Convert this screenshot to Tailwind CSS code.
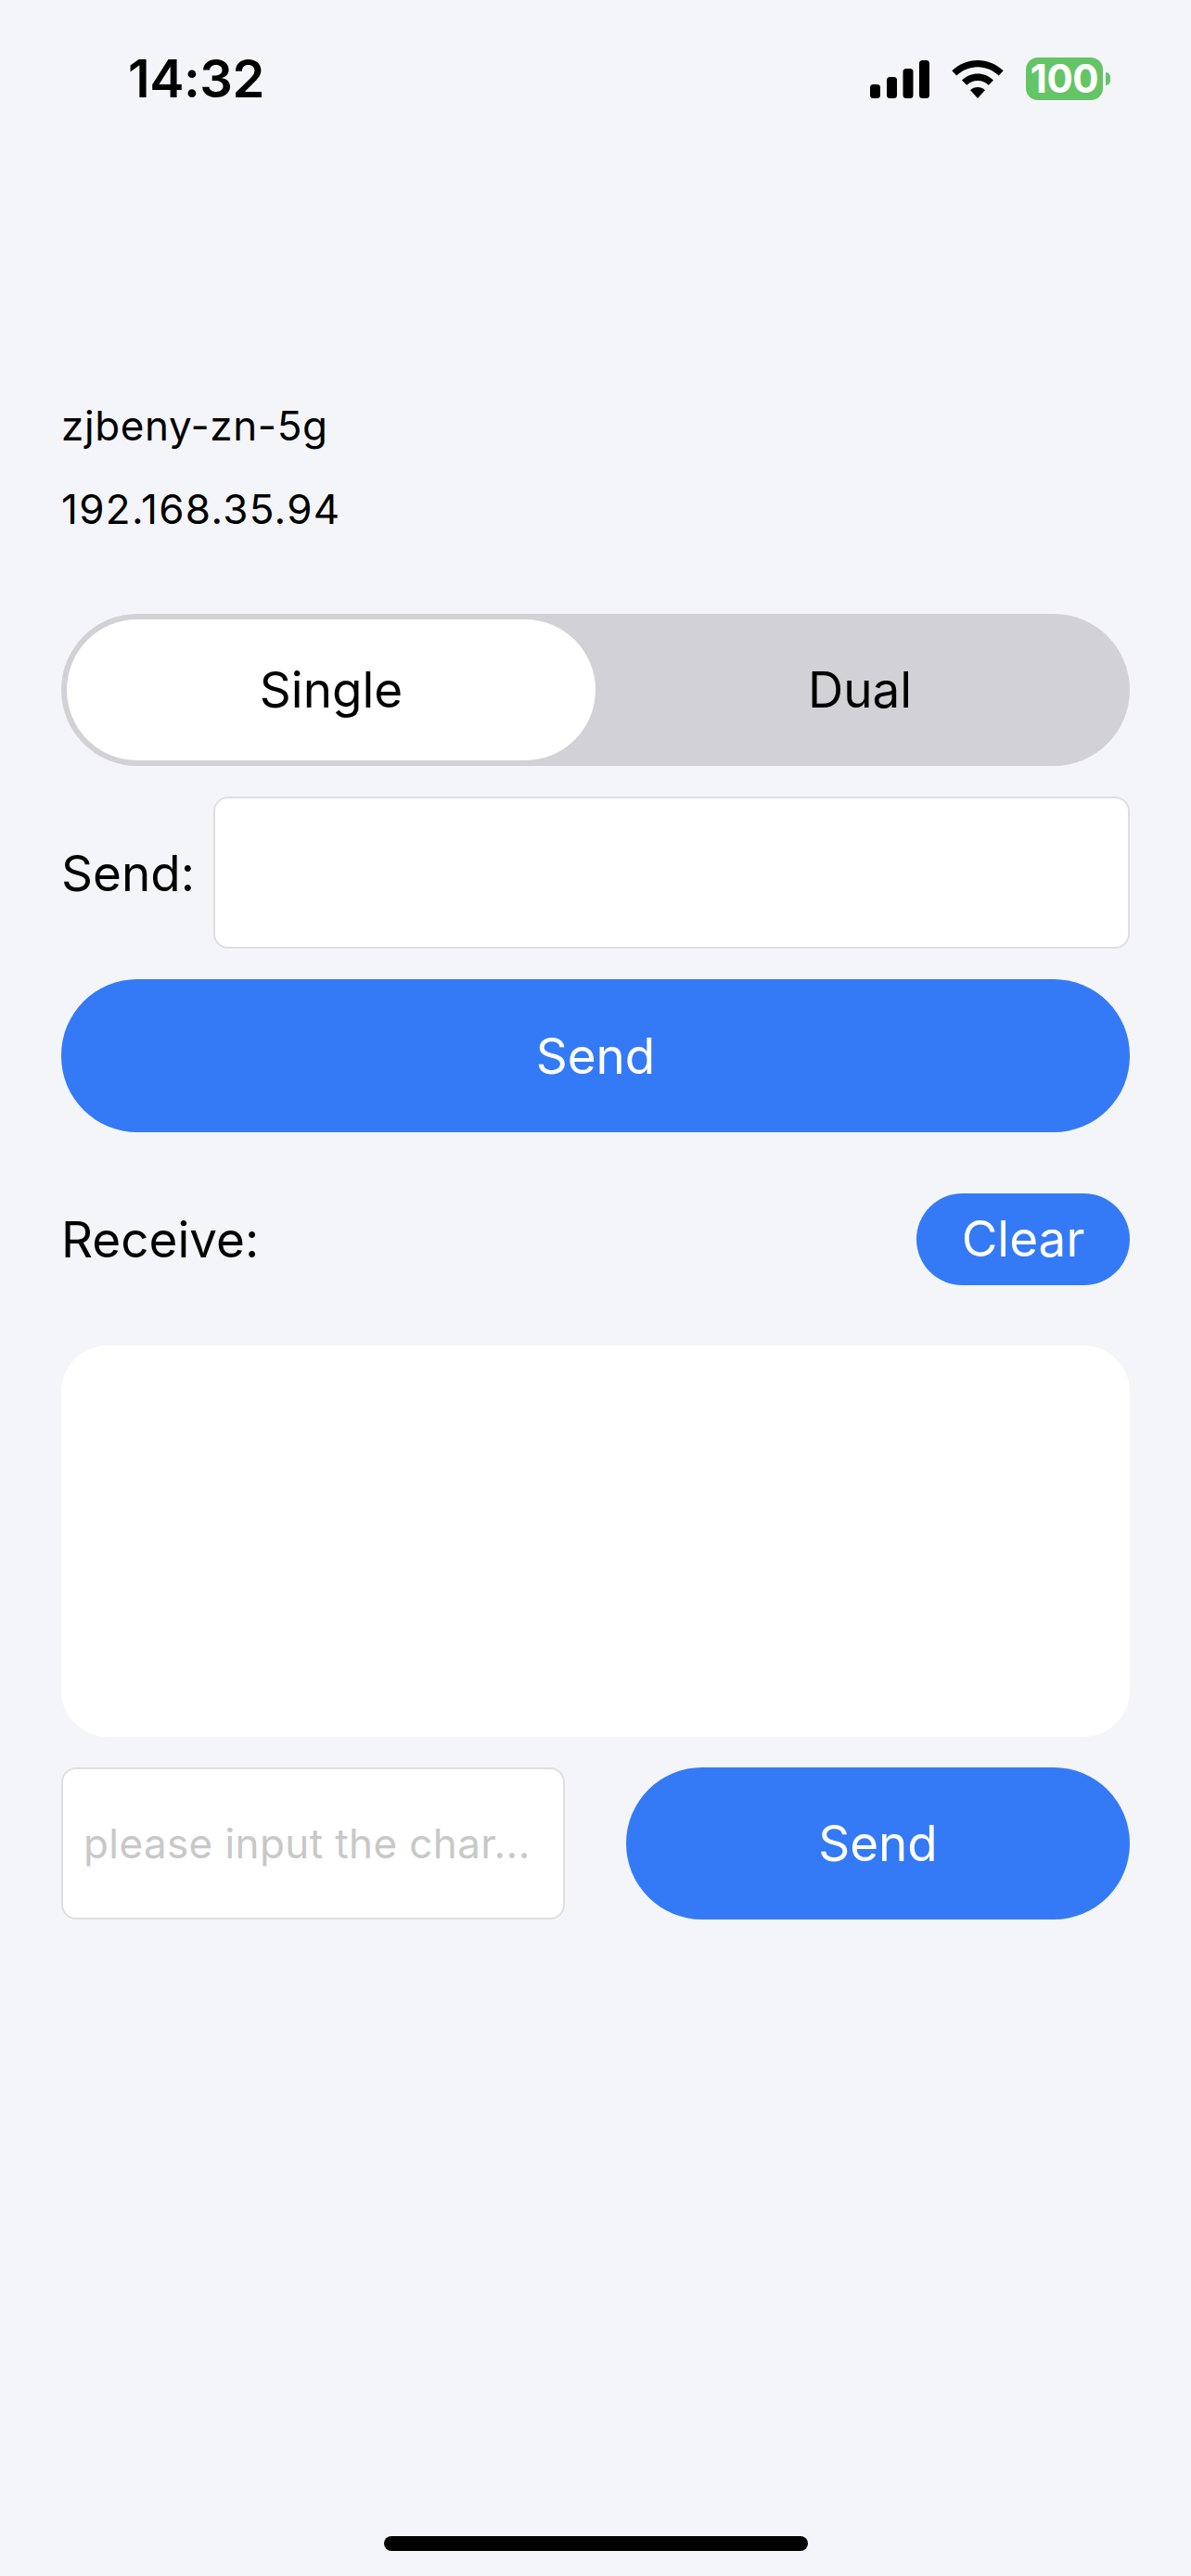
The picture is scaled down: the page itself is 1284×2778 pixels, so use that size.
<!DOCTYPE html>
<html lang="en">
<head>
    <meta charset="UTF-8" />
    <meta name="viewport" content="width=device-width, initial-scale=1" />
    <title>Socket</title>
    <script src="https://cdn.jsdelivr.net/npm/@tailwindcss/browser@4"></script>
</head>
<body class="bg-[#f4f5f9] text-black font-['Inter',sans-serif] antialiased">
<div class="relative w-[1284px] h-[2778px] overflow-hidden">

    <!-- status bar -->
    <div class="flex items-center h-[170px] pl-[138px] pr-[87px]">
        <div class="text-[56px] leading-none font-semibold tracking-[-0.5px]">14:32</div>
        <div class="ml-auto flex items-center gap-[24px]">
            <svg width="64" height="41" viewBox="0 0 64 41" fill="#000">
                <rect x="0" y="26" width="11" height="15" rx="3.5"/>
                <rect x="18" y="18" width="11" height="23" rx="3.5"/>
                <rect x="35.500" y="9" width="11" height="32" rx="3.5"/>
                <rect x="53" y="0" width="11" height="41" rx="3.5"/>
            </svg>
            <svg width="56" height="41" viewBox="0 0 56 41" fill="#000">
                <path d="M28 0C17.500 0 8 4.100 0.300 11.200L5.300 16.500C11.300 10.800 19.300 7.200 28 7.200C36.700 7.200 44.700 10.800 50.700 16.500L55.700 11.200C48 4.100 38.500 0 28 0Z"/>
                <path d="M28 14.500C21.800 14.500 15.800 17 11 21.500L16.200 26.800C19.400 23.800 23.500 22 28 22C32.500 22 36.600 23.800 39.800 26.800L45 21.500C40.200 17 34.200 14.500 28 14.500Z"/>
                <path d="M28 29C25.200 29 22.300 30.100 20.100 32.200L28 41L35.900 32.200C33.700 30.100 30.800 29 28 29Z"/>
            </svg>
            <div class="flex items-center gap-[3px]">
                <div class="w-[83px] h-[46px] rounded-[13px] bg-[#65c466] flex items-center justify-center text-white font-bold text-[42px] leading-none tracking-[-0.5px]">100</div>
                <div class="w-[5px] h-[14px] rounded-r-full bg-[#65c466]"></div>
            </div>
        </div>
    </div>

    <main class="px-[66px]">
        <!-- wifi info -->
        <div class="mt-[255px] text-[44px] leading-[68px] tracking-[0.6px]">zjbeny-zn-5g</div>
        <div class="mt-[22px] text-[44px] leading-[68px] tracking-[1.3px]">192.168.35.94</div>

        <!-- mode switch -->
        <div class="mt-[79px] flex h-[164px] rounded-[82px] bg-[#d1d1d6] p-[6px] text-[53px]">
            <div class="w-[570px] rounded-[76px] bg-white flex items-center justify-center pt-[2px]">Single</div>
            <div class="flex-1 flex items-center justify-center pt-[2px]">Dual</div>
        </div>

        <!-- send row -->
        <div class="mt-[33px] flex items-center gap-[20px]">
            <div class="text-[53px] leading-none pt-[2px]">Send:</div>
            <input type="text" class="flex-1 min-w-0 h-[164px] rounded-[16px] bg-white border-2 border-[#dfdfe3] outline-none" />
        </div>

        <button class="mt-[33px] block w-full h-[165px] pt-[3px] rounded-[82px] bg-[#347af6] text-white text-[53px]">Send</button>

        <!-- receive -->
        <div class="mt-[66px] flex items-center justify-between">
            <div class="text-[53px] leading-none pt-[2px]">Receive:</div>
            <button class="w-[230px] h-[99px] rounded-[50px] bg-[#347af6] text-white text-[53px]">Clear</button>
        </div>
        <div class="mt-[65px] h-[422px] rounded-[50px] bg-white"></div>

        <!-- bottom row -->
        <div class="mt-[33px] flex items-center justify-between">
            <input type="text" placeholder="please input the char..." class="w-[543px] h-[164px] px-[22px] rounded-[16px] bg-white border-2 border-[#dfdfe3] outline-none text-[44px] tracking-[0.4px] placeholder:text-[#c8c8c8]" />
            <button class="w-[543px] h-[164px] pt-[2px] rounded-[82px] bg-[#347af6] text-white text-[53px]">Send</button>
        </div>
    </main>

    <!-- home indicator -->
    <div class="absolute left-[414px] top-[2735px] w-[457px] h-[16px] rounded-full bg-black"></div>
</div>
</body>
</html>
